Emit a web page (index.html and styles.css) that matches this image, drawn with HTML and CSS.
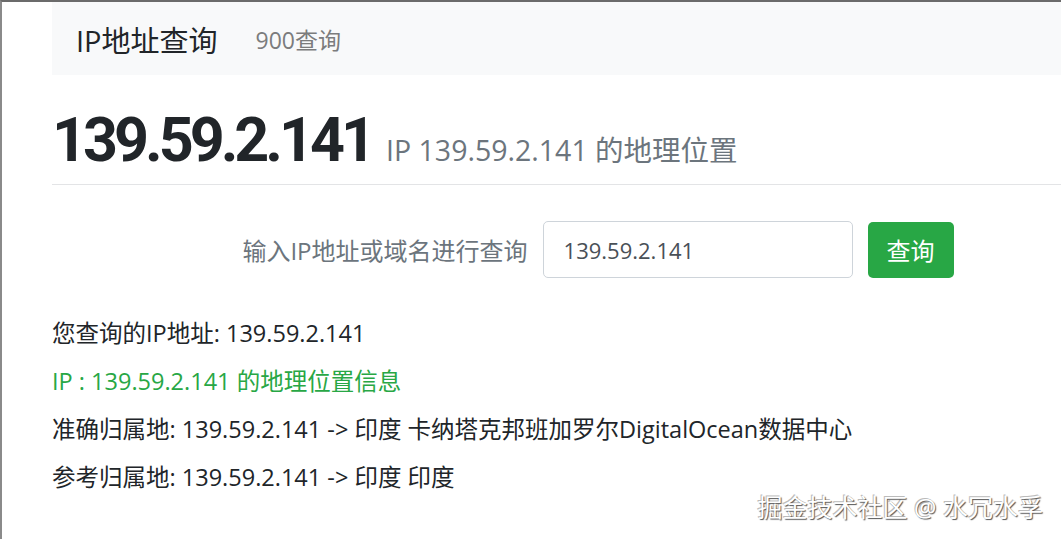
FILE: index.html
```html
<!DOCTYPE html>
<html lang="zh-CN">
<head>
    <meta charset="UTF-8">
    <meta name="viewport" content="width=device-width, initial-scale=1.0">
    <title>IP地址查询</title>
    <link rel="stylesheet" href="styles.css">
</head>
<body>

<div class="page">
    <nav class="navbar">
        <a class="brand" href="#">IP地址查询</a>
        <a class="nav-link" href="#">900查询</a>
    </nav>

    <div class="container">
        <div class="page-header">
            <h1 class="ip-title">139.59.2.141</h1>
            <small class="ip-sub">IP 139.59.2.141 的地理位置</small>
        </div>

        <form class="search-form" onsubmit="return false">
            <label class="search-label" for="ipInput">输入IP地址或域名进行查询</label>
            <input class="search-input" id="ipInput" type="text" value="139.59.2.141">
            <button class="search-btn" type="submit">查询</button>
        </form>

        <div class="result">
            <p>您查询的IP地址: 139.59.2.141</p>
            <p class="result-title">IP : 139.59.2.141 的地理位置信息</p>
            <p>准确归属地: 139.59.2.141 -&gt; 印度 卡纳塔克邦班加罗尔DigitalOcean数据中心</p>
            <p>参考归属地: 139.59.2.141 -&gt; 印度 印度</p>
        </div>
    </div>

    <div class="watermark">掘金技术社区 @ 水冗水孚</div>
</div>

</body>
</html>
```

FILE: styles.css
```css
body {
    margin: 0;
    font-family: "Open Sans", "Noto Sans CJK SC", sans-serif;
    color: #212529;
    background-color: #fff;
    overflow: hidden;
}
.page {
    position: relative;
    height: 537px;
    border-top: 2px solid #6b6b6b;
    border-left: 2px solid #8a8a8a;
    overflow: hidden;
}
.navbar {
    display: flex;
    align-items: center;
    height: 73px;
    margin-left: 50px;
    padding-left: 24px;
    background-color: #f8f9fa;
}
.brand {
    font-size: 29px;
    color: #212529;
    text-decoration: none;
    margin-right: 38px;
}
.nav-link {
    font-size: 23px;
    color: #7b7c7d;
    text-decoration: none;
}
.container {
    width: 1092px;
    margin-left: 50px;
}
.page-header {
    display: flex;
    align-items: baseline;
    margin-top: 35px;
    padding-bottom: 13px;
    border-bottom: 1px solid #e3e4e6;
    line-height: 1;
}
.ip-title {
    margin: 0 14px 0 0;
    font-family: Roboto, "Noto Sans CJK SC", sans-serif;
    font-size: 61px;
    font-weight: 700;
    line-height: 1;
    letter-spacing: -4px;
}
.ip-sub {
    font-size: 28.5px;
    color: #6c757d;
}
.search-form {
    display: flex;
    justify-content: center;
    align-items: center;
    margin-top: 36px;
}
.search-label {
    font-size: 24px;
    color: #6c757d;
    margin-right: 15px;
}
.search-input {
    box-sizing: border-box;
    width: 310px;
    height: 57px;
    padding: 0 20px;
    font-family: inherit;
    font-size: 22px;
    color: #495057;
    border: 1px solid #ced4da;
    border-radius: 5px;
}
.search-btn {
    width: 86px;
    height: 56px;
    margin-left: 15px;
    font-family: inherit;
    font-size: 24px;
    color: #fff;
    background-color: #28a745;
    border: none;
    border-radius: 5px;
    cursor: pointer;
}
.result {
    margin-top: 31px;
}
.result p {
    margin: 0;
    font-size: 23.5px;
    line-height: 48px;
}
.result-title {
    color: #28a745;
}
.watermark {
    position: absolute;
    right: 18px;
    bottom: 15px;
    font-size: 25px;
    color: #fff;
    text-shadow: 1px 1px 1px #555, -1px -1px 0 #bbb;
}
```
